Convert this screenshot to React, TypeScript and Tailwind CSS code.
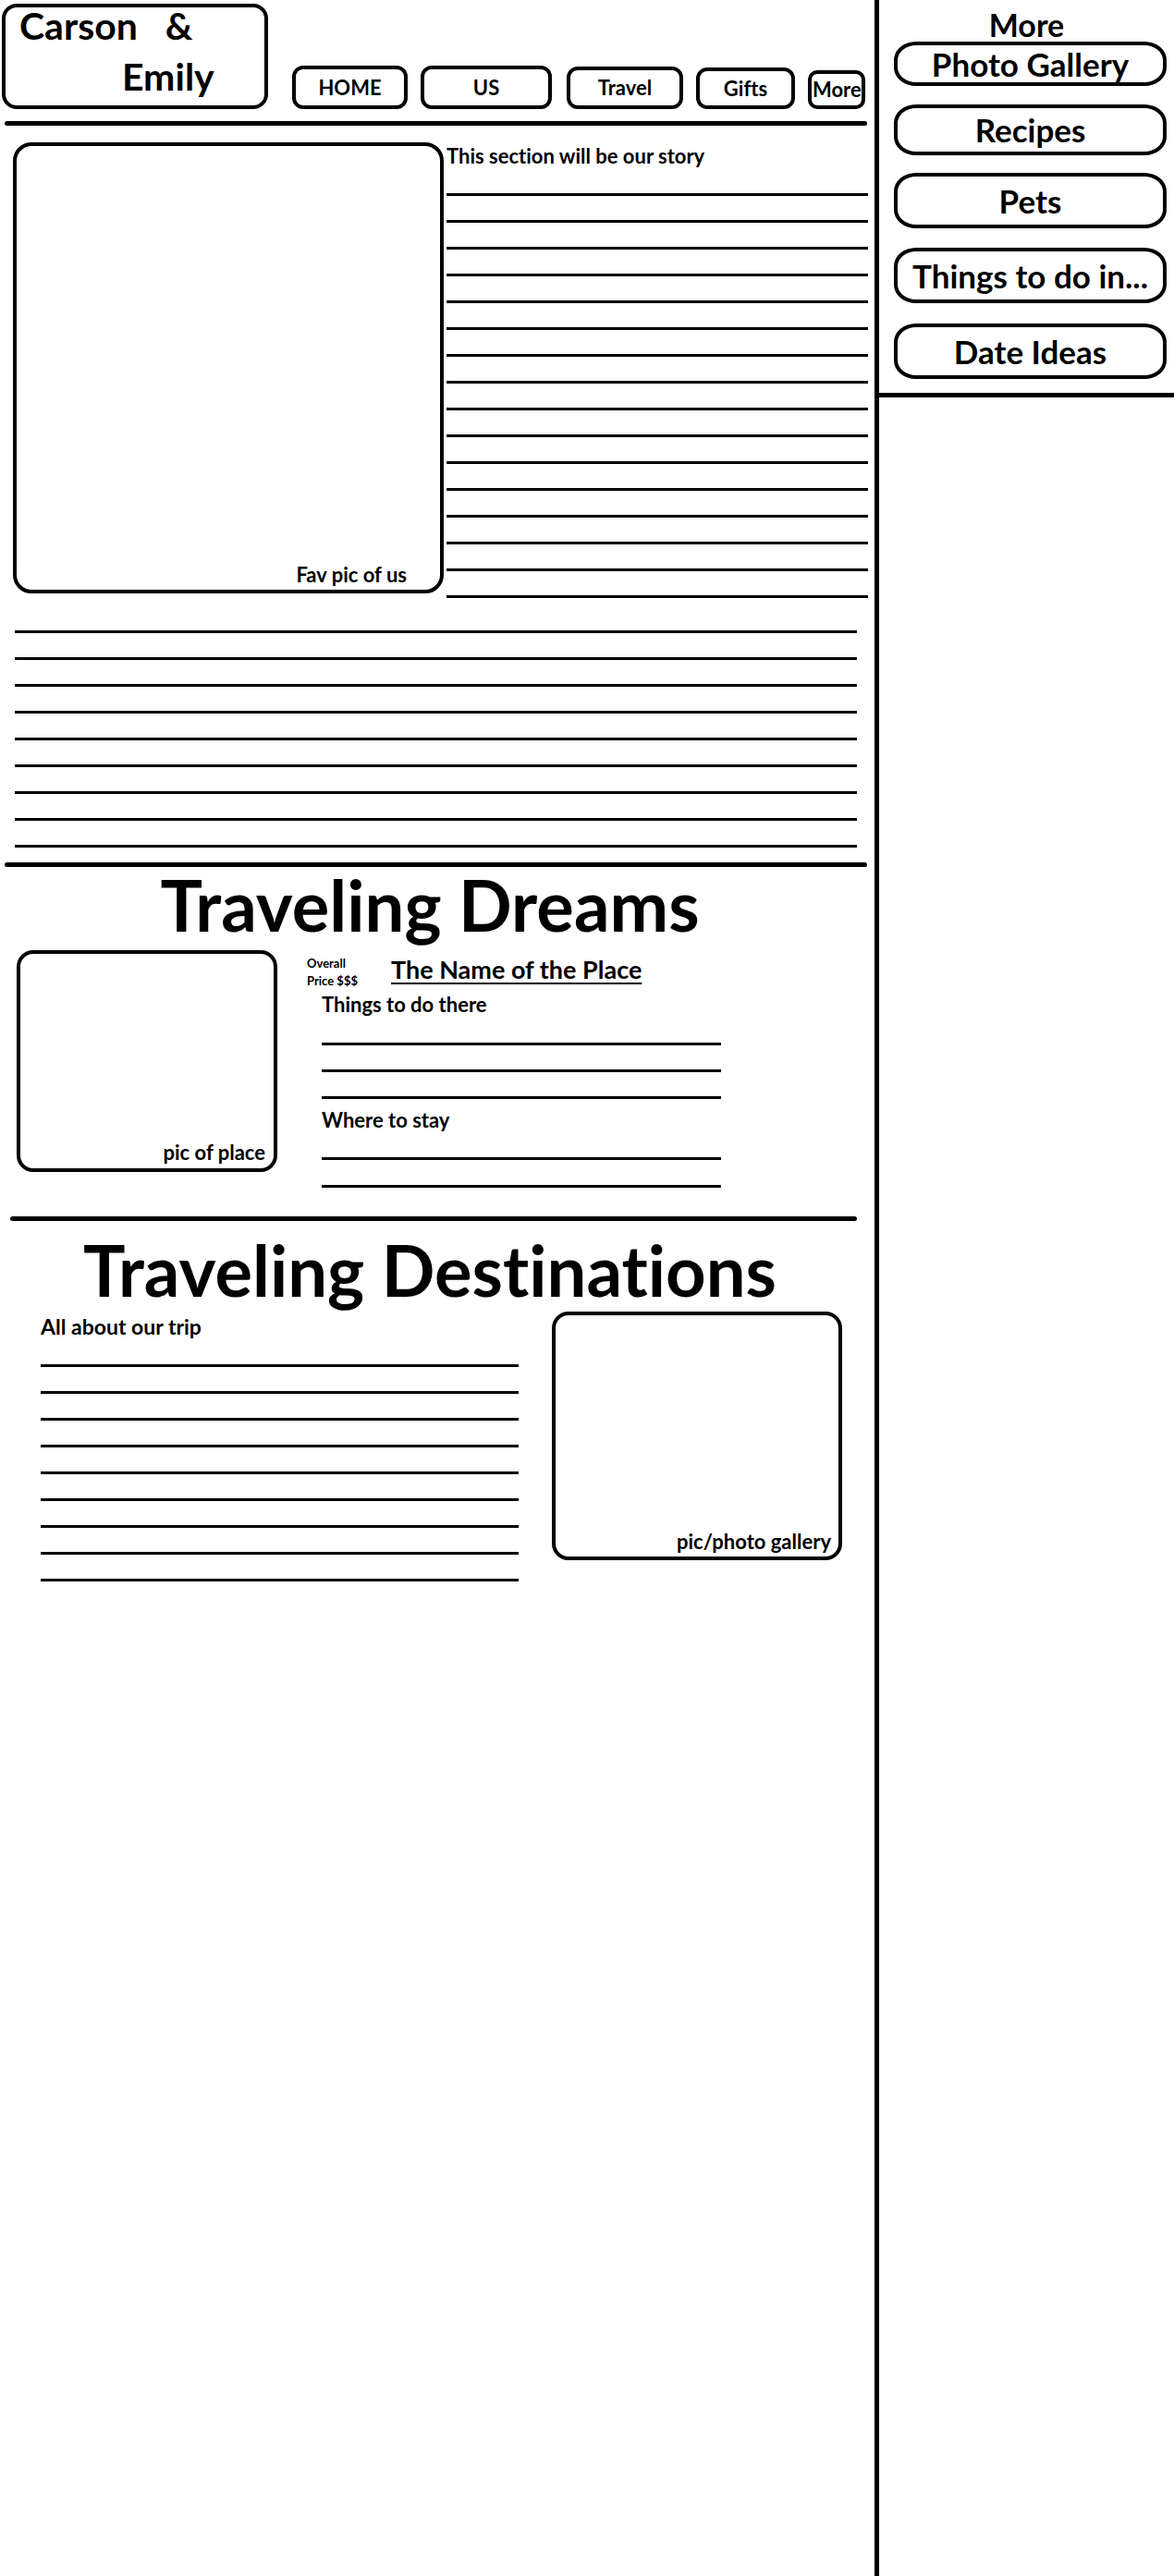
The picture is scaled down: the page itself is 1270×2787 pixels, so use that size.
import React from 'react'

type LinesProps = { count: number; className?: string; gap?: string }

// ruled "write here" lines
function Lines({ count, className = '', gap = 'gap-[26px]' }: LinesProps) {
  return (
    <div className={`flex flex-col ${gap} ${className}`}>
      {Array.from({ length: count }).map((_, i) => (
        <div key={i} className="h-[3px] bg-black" />
      ))}
    </div>
  )
}

function Rule({ className = '' }: { className?: string }) {
  return <div className={`h-[5px] rounded-full bg-black ${className}`} />
}

const NAV = [
  { label: 'HOME', cls: 'w-[125px] h-[47px]' },
  { label: 'US', cls: 'ml-[14px] w-[142px] h-[47px]' },
  { label: 'Travel', cls: 'ml-[16px] w-[126px] h-[46px]' },
  { label: 'Gifts', cls: 'ml-[14px] w-[107px] h-[45px]' },
]

const MORE = [
  { label: 'Photo Gallery', cls: 'mt-[1px] h-[48px]' },
  { label: 'Recipes', cls: 'mt-[20px] h-[55px]' },
  { label: 'Pets', cls: 'mt-[19px] h-[60px]' },
  { label: 'Things to do in...', cls: 'mt-[21px] h-[60px]' },
  { label: 'Date Ideas', cls: 'mt-[22px] h-[60px]' },
]

export default function App() {
  return (
    <div className="flex min-h-[2787px] bg-white font-['Lato',sans-serif] font-bold text-black [font-variant-ligatures:none]">
      <main className="w-[946px] shrink-0">
        <header className="flex items-end pl-[2px] pt-[4px]">
          <div className="h-[114px] w-[288px] shrink-0 rounded-[16px] border-4 border-black">
            <div className="-mt-[8px] whitespace-pre text-[41px] leading-[55px]">
              <div className="pl-[15px]">Carson   &amp;</div>
              <div className="pl-[126px]">Emily</div>
            </div>
          </div>
          <nav className="ml-[26px] flex items-end text-[22px] leading-none">
            {NAV.map((n) => (
              <div
                key={n.label}
                className={`flex items-center justify-center rounded-[12px] border-4 border-black ${n.cls}`}
              >
                {n.label}
              </div>
            ))}
            <div className="ml-[14px] flex h-[42px] w-[62px] items-center rounded-[10px] border-4 border-black pl-[1px]">
              More
            </div>
          </nav>
        </header>

        <Rule className="ml-[5px] mt-[13px] w-[933px]" />

        <section className="flex items-start">
          <div className="ml-[14px] mt-[18px] flex h-[488px] w-[466px] shrink-0 items-end justify-end rounded-[20px] border-4 border-black pb-[5px] pr-[36px] text-[22px] leading-none">
            Fav pic of us
          </div>
          <div className="ml-[3px] w-[456px] pt-[22px]">
            <p className="text-[22px] leading-[22px]">This section will be our story</p>
            <Lines count={16} className="mt-[29px]" />
          </div>
        </section>
        <Lines count={9} className="ml-[16px] mt-[35px] w-[911px]" />

        <Rule className="ml-[5px] mt-[16px] w-[933px]" />

        <h1 className="mt-[3px] w-[930px] text-center text-[76px] leading-none">Traveling Dreams</h1>
        <section className="mt-[11px] flex items-start">
          <div className="ml-[18px] flex h-[240px] w-[282px] shrink-0 items-end justify-end rounded-[18px] border-4 border-black pb-[6px] pr-[9px] text-[22px] leading-none">
            pic of place
          </div>
          <div className="ml-[32px] flex flex-col">
            <div className="flex items-start">
              <div className="w-[91px] pt-[5px] text-[13px] leading-[19px]">
                Overall
                <br />
                Price $$$
              </div>
              <h2 className="mt-[7px] text-[27px] leading-none underline decoration-[2px] underline-offset-[4px]">
                The Name of the Place
              </h2>
            </div>
            <div className="ml-[16px] w-[432px]">
              <p className="mt-[5px] text-[22px] leading-none">Things to do there</p>
              <Lines count={3} className="mt-[30px]" />
              <p className="mt-[12px] text-[22px] leading-none">Where to stay</p>
              <Lines count={2} gap="gap-[27px]" className="mt-[29px]" />
            </div>
          </div>
        </section>

        <Rule className="ml-[11px] mt-[31px] w-[916px]" />

        <h1 className="mt-[15px] w-[930px] text-center text-[76px] leading-none">Traveling Destinations</h1>
        <section className="flex items-start">
          <div className="ml-[44px] w-[517px] shrink-0 pt-[12px]">
            <p className="text-[23px] leading-none">All about our trip</p>
            <Lines count={9} className="mt-[29px]" />
          </div>
          <div className="ml-[36px] mt-[7px] flex h-[269px] w-[314px] shrink-0 items-end justify-end rounded-[18px] border-4 border-black pb-[5px] pr-[8px] text-[22px] leading-none">
            pic/photo gallery
          </div>
        </section>
      </main>

      <aside className="flex-1 border-l-[5px] border-black">
        <div className="border-b-[5px] border-black pb-[15px]">
          <h2 className="pt-[10px] text-center text-[34px] leading-none">More</h2>
          {MORE.map((m) => (
            <div
              key={m.label}
              className={`ml-[16px] mr-[8px] flex items-center justify-center rounded-[24px/20px] border-4 border-black text-[35px] leading-none ${m.cls}`}
            >
              {m.label}
            </div>
          ))}
        </div>
      </aside>
    </div>
  )
}
